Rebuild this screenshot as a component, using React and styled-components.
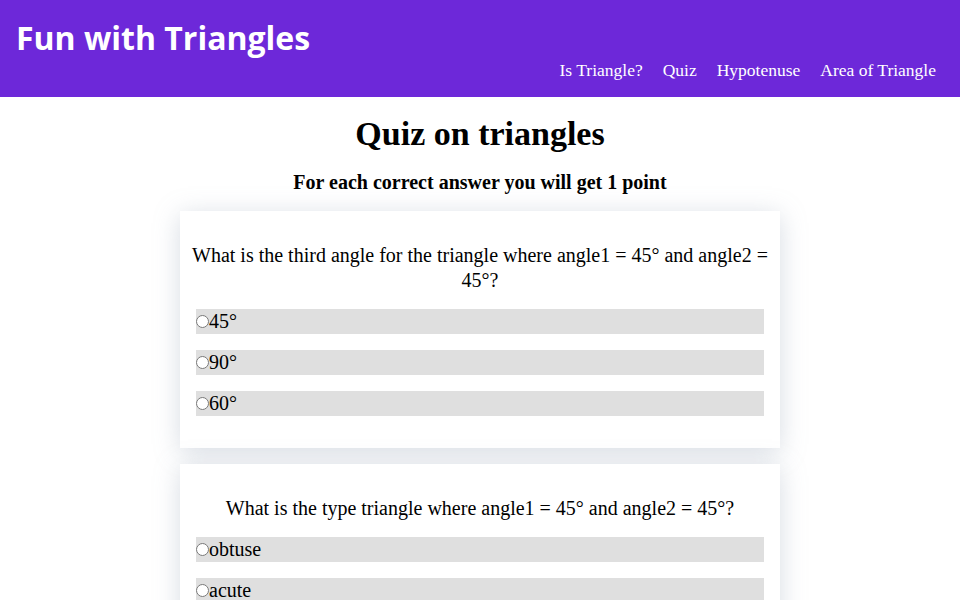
import React from 'react';
import styled, { createGlobalStyle } from 'styled-components';

const Global = createGlobalStyle`
  body {
    margin: 0;
    background: #fff;
    font-family: 'Liberation Serif', 'DejaVu Serif', serif;
    color: #000;
  }
`

const Header = styled.header`
  background: #6d28d9;
  color: #fff;
  height: 97px;
  box-sizing: border-box;
  padding: 18px 24px 0 16px;
  display: flex;
  flex-direction: column;
`

const Brand = styled.h1`
  margin: 0;
  font-family: 'Open Sans', sans-serif;
  font-weight: 700;
  font-size: 32px;
  line-height: 40px;
`

const Nav = styled.nav`
  display: flex;
  justify-content: flex-end;
  gap: 20px;
`

const NavLink = styled.a`
  color: #fff;
  text-decoration: none;
  font-size: 17.5px;
  line-height: 24px;
`

const Main = styled.main`
  display: flex;
  flex-direction: column;
  align-items: center;
`

const Title = styled.h2`
  font-size: 34px;
  line-height: 44px;
  margin: 15px 0 0;
`

const Sub = styled.h3`
  font-size: 20px;
  line-height: 28px;
  margin: 12px 0 0;
`

const Card = styled.section`
  width: 600px;
  background: #fff;
  padding: 16px 0;
  margin-bottom: 16px;
  box-shadow: 0 4px 24px rgba(140, 155, 175, 0.35);
  &:first-of-type { margin-top: 15px; }
`

const Question = styled.p`
  margin: 16px 0;
  text-align: center;
  font-size: 20px;
  line-height: 25px;
`

const Option = styled.label`
  display: flex;
  align-items: center;
  margin: 16px;
  height: 25px;
  background: #dfdfdf;
  font-size: 20px;
`

const Radio = styled.input`
  margin: 0;
  width: 13px;
  height: 13px;
`

const quiz = [
  {
    q: 'What is the third angle for the triangle where angle1 = 45° and angle2 = 45°?',
    opts: ['45°', '90°', '60°'],
  },
  {
    q: 'What is the type triangle where angle1 = 45° and angle2 = 45°?',
    opts: ['obtuse', 'acute', 'right angled'],
  },
]

export default function App() {
  return (
    <>
      <Global />
      <Header>
        <Brand>Fun with Triangles</Brand>
        <Nav>
          <NavLink href="#">Is Triangle?</NavLink>
          <NavLink href="#">Quiz</NavLink>
          <NavLink href="#">Hypotenuse</NavLink>
          <NavLink href="#">Area of Triangle</NavLink>
        </Nav>
      </Header>
      <Main>
        <Title>Quiz on triangles</Title>
        <Sub>For each correct answer you will get 1 point</Sub>
        <div>
          {quiz.map((item, i) => (
            <Card key={i}>
              <Question>{item.q}</Question>
              {item.opts.map(o => (
                <Option key={o}>
                  <Radio type="radio" name={'q' + i} value={o} />
                  {o}
                </Option>
              ))}
            </Card>
          ))}
        </div>
      </Main>
    </>
  );
}
